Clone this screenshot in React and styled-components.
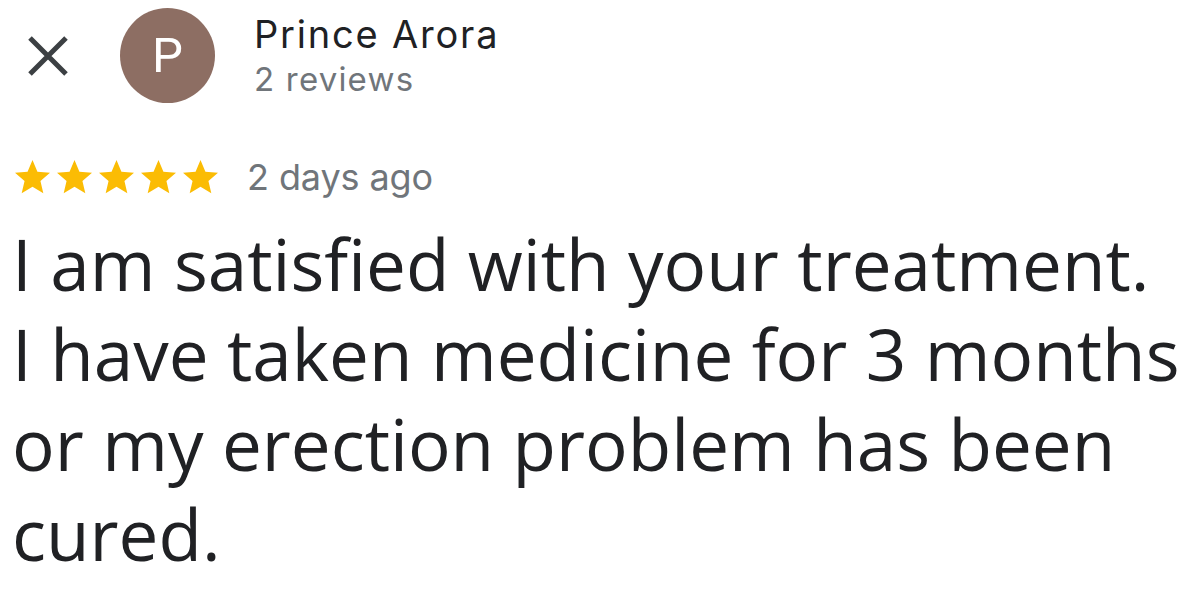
import styled, { createGlobalStyle } from "styled-components";

const GlobalStyle = createGlobalStyle`
  body {
    margin: 0;
    background: #ffffff;
  }
`;

const STAR = "M12 17.27L18.18 21l-1.64-7.03L22 9.24l-7.19-.61L12 2 9.19 8.63 2 9.24l5.46 4.73L5.82 21z";

export default function App() {
  return (
    <>
      <GlobalStyle />
      <Card>
        <Header>
          <CloseButton aria-label="Close">
            <svg width="42" height="42" viewBox="0 0 42 42">
              <path d="M3 3 L39 39 M39 3 L3 39" stroke="#3c4043" strokeWidth="5" />
            </svg>
          </CloseButton>
          <Avatar>P</Avatar>
          <Author>
            <Name>Prince Arora</Name>
            <Meta>2 reviews</Meta>
          </Author>
        </Header>
        <RatingRow>
          <Stars>
            {[0, 1, 2, 3, 4].map((i) => (
              <svg key={i} width="35" height="34" viewBox="2 2 20 19.4">
                <path d={STAR} fill="#fbbc04" />
              </svg>
            ))}
          </Stars>
          <When>2 days ago</When>
        </RatingRow>
        <Review>
          I am satisfied with your treatment.
          <br />I have taken medicine for 3 months
          <br />or my erection problem has been
          <br />cured.
        </Review>
      </Card>
    </>
  );
}

const Card = styled.div`
  width: 1185px;
  height: 595px;
  overflow: hidden;
  background: #fff;
`;

const Header = styled.div`
  display: flex;
  align-items: center;
  padding: 8px 0 0 27px;
`;

const CloseButton = styled.div`
  width: 42px;
  height: 42px;
  display: flex;
  margin-right: 51px;
`;

const Avatar = styled.div`
  width: 95px;
  height: 95px;
  border-radius: 50%;
  background: #8d6e63;
  color: #fff;
  display: flex;
  align-items: center;
  justify-content: center;
  font-family: Roboto, "Liberation Sans", sans-serif;
  font-size: 49px;
  font-weight: 400;
  margin-right: 39px;
`;

const Author = styled.div`
  display: flex;
  flex-direction: column;
  gap: 3px;
`;

const Name = styled.div`
  font-family: Inter, Roboto, sans-serif;
  font-size: 38px;
  line-height: 44px;
  letter-spacing: 1.8px;
  color: #202124;
`;

const Meta = styled.div`
  font-family: Inter, Roboto, sans-serif;
  font-size: 33px;
  line-height: 40px;
  letter-spacing: 1.2px;
  color: #70757a;
`;

const RatingRow = styled.div`
  display: flex;
  align-items: center;
  padding: 52px 0 0 15px;
`;

const Stars = styled.div`
  display: flex;
  gap: 7px;
  margin-right: 29px;
`;

const When = styled.div`
  font-family: Inter, Roboto, sans-serif;
  font-size: 36px;
  line-height: 44px;
  letter-spacing: -0.1px;
  color: #70757a;
`;

const Review = styled.p`
  margin: 20px 0 0 12px;
  font-family: "Open Sans", sans-serif;
  font-weight: 500;
  font-size: 71px;
  line-height: 90px;
  letter-spacing: 0;
  color: #202124;
  white-space: nowrap;
`;
